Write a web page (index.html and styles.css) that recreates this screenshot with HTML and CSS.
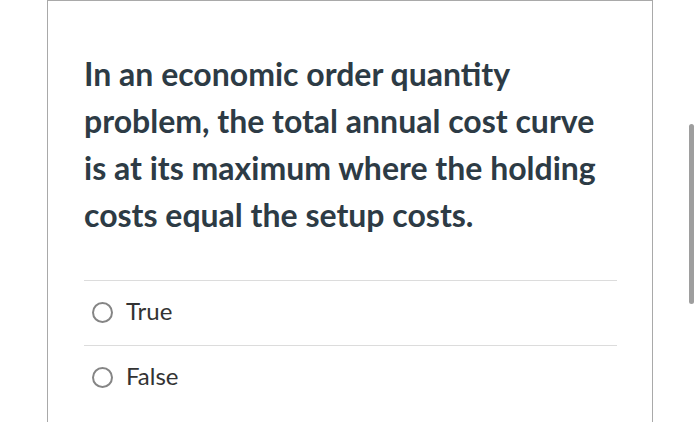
FILE: index.html
```html
<!DOCTYPE html>
<html>
<head>
<meta charset="utf-8">
<link rel="stylesheet" href="styles.css">
</head>
<body>
<div class="card">
  <p class="question">In an economic order quantity problem, the total annual cost curve is at its maximum where the holding costs equal the setup costs.</p>
  <div class="answers">
    <label class="answer"><span class="radio"></span><span class="label">True</span></label>
    <label class="answer"><span class="radio"></span><span class="label">False</span></label>
  </div>
</div>
<div class="scrollbar"></div>
</body>
</html>
```
FILE: styles.css
```css
html, body {
  margin: 0;
  padding: 0;
  background: #fff;
  height: 422px;
  overflow: hidden;
}
body {
  font-family: Lato, "Liberation Sans", sans-serif;
  color: #2d3b45;
  position: relative;
}
.card {
  margin-left: 47px;
  width: 606px;
  height: 440px;
  border: 1px solid #a9a9a9;
  border-bottom: none;
  padding: 49px 35px 0 36px;
  box-sizing: border-box;
}
.question {
  margin: 0;
  font-weight: 700;
  font-size: 32px;
  line-height: 47px;
}
.answers {
  margin-top: 42px;
  border-top: 1px solid #dcdcdc;
}
.answer {
  display: flex;
  align-items: center;
  height: 64px;
  border-bottom: 1px solid #dcdcdc;
  font-size: 24px;
  color: #333;
}
.answer:last-child {
  border-bottom: none;
}
.label {
  position: relative;
  top: -3px;
}
.radio {
  width: 17px;
  height: 17px;
  border: 2px solid #858585;
  border-radius: 50%;
  margin-left: 8px;
  margin-right: 13px;
  position: relative;
  top: -1px;
  flex: none;
}
.scrollbar {
  position: absolute;
  left: 689px;
  top: 124px;
  width: 5px;
  height: 180px;
  background: #9e9e9e;
  border-radius: 3px;
}
```
